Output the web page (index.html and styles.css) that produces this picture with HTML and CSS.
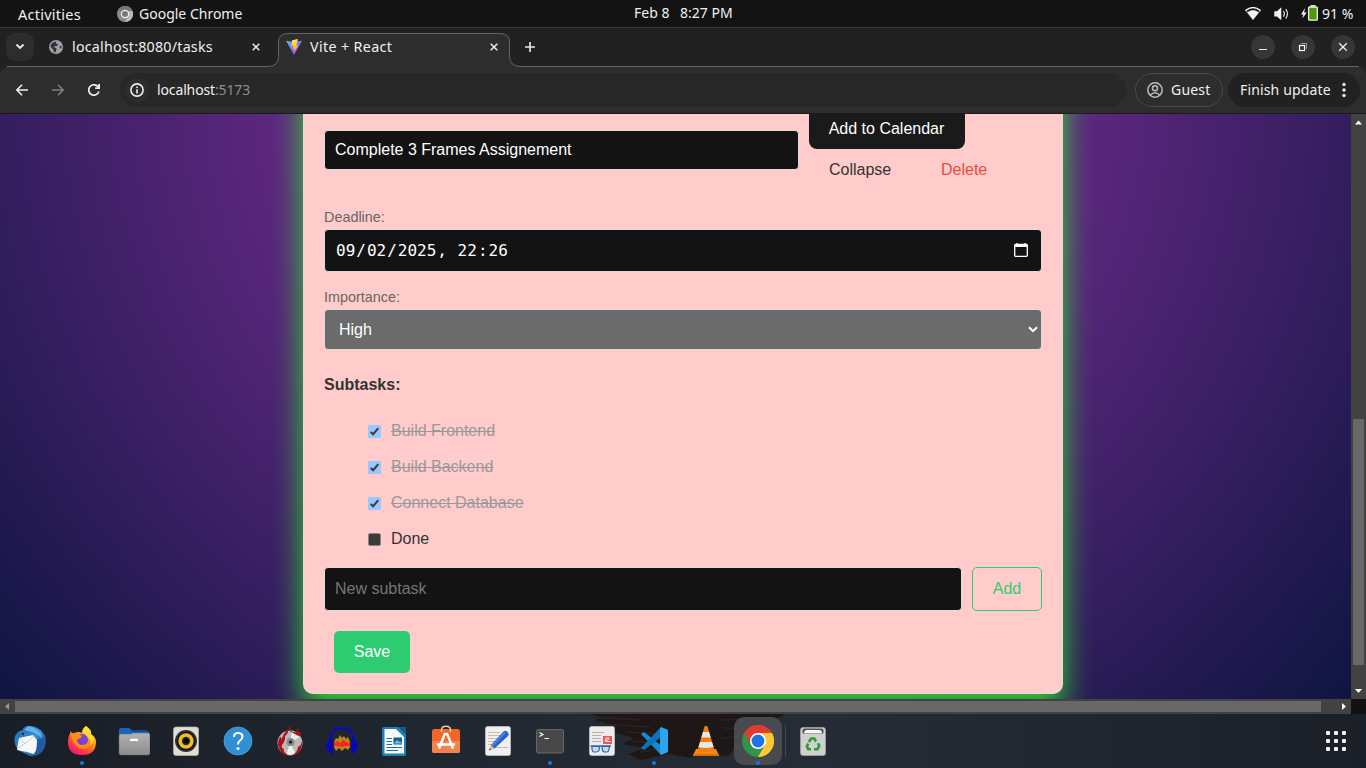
FILE: index.html
```
<!DOCTYPE html>
<html lang="en">
<head>
<meta charset="utf-8">
<title>Vite + React</title>
<link rel="stylesheet" href="styles.css">
</head>
<body>
<div class="desktop">
  <header class="topbar">
    <span class="activities">Activities</span>
    <svg class="app-icon" width="16" height="16" viewBox="0 0 16 16"><circle cx="8" cy="8" r="8" fill="#8b8b8b"/><path d="M8 8 L1.2 3.8 A8 8 0 0 1 15.5 5 Z" fill="#777"/><path d="M8 16 A8 8 0 0 0 15.5 5 H9 L11.5 10 Z" fill="#b9b9b9"/><circle cx="8" cy="8" r="4.2" fill="#f2f2f2"/><circle cx="8" cy="8" r="3" fill="#777"/></svg>
    <span class="app-name">Google Chrome</span>
    <span class="clock-date">Feb 8</span>
    <span class="clock-time">8:27 PM</span>
    <div class="status">
      <svg width="16" height="14" viewBox="0 0 16 14"><path d="M.3 3.6 Q8 -2.6 15.7 3.6 L8 13.2Z" fill="#aaa"/><path d="M1.5 3.7 Q8 -1.3 14.500 3.7 L13.400 5 Q8 1 2.600 5Z" fill="#161616"/><path d="M2.500 5.500 Q8 1.500 13.500 5.500 L8 12.600Z" fill="#f4f4f4"/><path d="M.3 3.600 Q8 -2.600 15.700 3.600" fill="none" stroke="#f4f4f4" stroke-width="1.200"/></svg>
      <svg class="speaker" width="15" height="14" viewBox="0 0 15 14"><path d="M.3 4.300 H3 L7.300 .300 V13.200 L3 9.500 H.3Z" fill="#f2f2f2"/><path d="M9.400 4 Q11.300 6.800 9.400 9.600 M11.700 2.200 Q15.300 6.800 11.700 11.500" fill="none" stroke="#dcdcdc" stroke-width="1.300"/></svg>
      <svg class="battery" width="17" height="16" viewBox="0 0 17 16"><path d="M4 3 L0 9.500 H2.300 L1.300 13.500 L5.700 7.500 H3.200Z" fill="#f2f2f2"/><rect x="7.600" y="2" width="8.700" height="13.200" rx="1" fill="#4e9a06" stroke="#f2f2f2" stroke-width="1.300"/><path d="M9.500 .800 H14.500" stroke="#f2f2f2" stroke-width="1.500"/></svg>
      <span class="percent">91 %</span>
    </div>
  </header>

  <div class="tabstrip">
    <svg class="tab-outline" width="1366" height="40" viewBox="0 0 1366 40"><path d="M8 40 V39.500 H268 Q278.500 38.500 278.500 29 V15 Q278.500 6.500 288 6.500 H500 Q509.500 6.500 509.500 15 V29 Q509.500 39.500 521 39.500 H1358 V40Z" fill="#2d2d2d"/><path d="M7 39.500 H268 Q278.500 39.500 278.500 29 V15 Q278.500 6.500 288 6.500 H500 Q509.500 6.500 509.500 15 V29 Q509.500 39.500 521 39.500 H1359" fill="none" stroke="#646464"/></svg>
    <div class="tabs">
      <span class="tab-search"><svg width="10" height="7" viewBox="0 0 10 7"><path d="M1.500 1.500 L5 5 L8.500 1.500" fill="none" stroke="#eee" stroke-width="1.800"/></svg></span>
      <div class="tab tab-first">
        <svg width="14" height="14" viewBox="0 0 14 14"><circle cx="7" cy="7" r="7" fill="#9aa0a6"/><path d="M7.500 1.500 Q6 3.500 8.500 4 Q9.500 5 8 6 L5 6.200 Q5 8 7 8 Q8.500 9 7 10.500 Q7 12 6 12.500 Q4.500 12 4.500 10 L1.500 6.500 Q2 3 5 2Z M12.500 6 Q10.500 5.500 10.500 7 Q11 8.500 12.300 8.600Z" fill="#303235"/></svg>
        <span class="tab-title">localhost:8080/tasks</span>
        <svg width="8" height="8" viewBox="0 0 8 8"><path d="M.7 .700 L7.300 7.300 M7.300 .700 L.7 7.300" stroke="#eee" stroke-width="1.500"/></svg>
      </div>
      <div class="tab tab-second">
        <svg width="16" height="16" viewBox="0 0 16 16"><defs><linearGradient id="vt" x1="0" y1="0" x2=".6" y2="1"><stop offset="0" stop-color="#41c0ff"/><stop offset="1" stop-color="#bd34fe"/></linearGradient><linearGradient id="vb" x1="0" y1="0" x2="0" y2="1"><stop offset="0" stop-color="#ffe75a"/><stop offset="1" stop-color="#ffa800"/></linearGradient></defs><path d="M0 1.800 L7.500 3 L16 1.800 L8 16Z" fill="url(#vt)"/><path d="M12 0 L6 1.300 L5.500 7.500 L7.500 7.200 L7 10 L8.500 9.700 L8 13 L12.300 6.500 L10.200 6.700Z" fill="url(#vb)"/></svg>
        <span class="tab-title">Vite + React</span>
        <svg width="8" height="8" viewBox="0 0 8 8"><path d="M.7 .700 L7.300 7.300 M7.300 .700 L.7 7.300" stroke="#eee" stroke-width="1.500"/></svg>
      </div>
      <svg class="new-tab" width="10" height="10" viewBox="0 0 10 10"><path d="M5 0 V10 M0 5 H10" stroke="#e6e6e6" stroke-width="1.700"/></svg>
      <div class="window-buttons">
        <span><svg width="10" height="10" viewBox="0 0 10 10"><path d="M1 7.500 H9" stroke="#eee"/></svg></span>
        <span><svg width="10" height="10" viewBox="0 0 10 10"><path d="M3 1.500 H8.500 V7" fill="none" stroke="#999"/><rect x="1.500" y="3.500" width="5" height="5" fill="none" stroke="#fff" stroke-width="1.200"/></svg></span>
        <span><svg width="10" height="10" viewBox="0 0 10 10"><path d="M1.200 1.200 L8.800 8.800 M8.800 1.200 L1.200 8.800" stroke="#eee" stroke-width="1.300"/></svg></span>
      </div>
    </div>
  </div>

  <div class="toolbar">
    <svg class="nav" width="12" height="12" viewBox="0 0 12 12"><path d="M12 6 H1 M6 .8 L.9 6 L6 11.200" fill="none" stroke="#eee" stroke-width="1.600"/></svg>
    <svg class="nav" width="12" height="12" viewBox="0 0 12 12"><path d="M0 6 H11 M6 .8 L11.100 6 L6 11.200" fill="none" stroke="#7e7e7e" stroke-width="1.600"/></svg>
    <svg class="nav" width="12" height="12" viewBox="0 0 12 12"><path d="M10.900 7.500 A5.200 5.200 0 1 1 10.200 3" fill="none" stroke="#eee" stroke-width="1.700"/><path d="M12 0 V4.900 H7.200 V3.300 H10.200 V0Z" fill="#eee"/></svg>
    <div class="address">
      <span class="site-info"><svg width="14" height="14" viewBox="0 0 14 14"><circle cx="7" cy="7" r="6.100" fill="none" stroke="#eee" stroke-width="1.600"/><path d="M7 6.200 V10.500 M7 3.500 V5" stroke="#eee" stroke-width="1.600"/></svg></span>
      <span class="url">localhost<i>:5173</i></span>
    </div>
    <div class="guest"><svg width="16" height="16" viewBox="0 0 16 16" fill="none" stroke="#bdbdbd" stroke-width="1.500"><circle cx="8" cy="8" r="7.200"/><circle cx="8" cy="6.300" r="2.500"/><path d="M3.300 13 Q8 8.500 12.700 13"/></svg><span>Guest</span></div>
    <div class="update"><span>Finish update</span><svg width="4" height="16" viewBox="0 0 4 16" fill="#eee"><circle cx="2" cy="2.500" r="1.700"/><circle cx="2" cy="8" r="1.700"/><circle cx="2" cy="13.500" r="1.700"/></svg></div>
  </div>

  <div class="viewport">
    <main class="page">
      <section class="card">
        <div class="task-head">
          <div class="field title-field">Complete 3 Frames Assignement</div>
          <div class="actions">
            <button class="calendar-btn">Add to Calendar</button>
            <div class="links"><span class="collapse">Collapse</span><span class="delete">Delete</span></div>
          </div>
        </div>
        <label class="label">Deadline:</label>
        <div class="field date-field">
          <span class="date"><b>09</b>/<b>02</b>/<b>2025</b>, <b>22</b>:<b>26</b></span>
          <svg width="14" height="14" viewBox="0 0 14 14"><path d="M1.500 1.500 H12.500 Q13.300 1.500 13.300 2.300 V12.500 Q13.300 13.300 12.500 13.300 H1.500 Q.7 13.300 .7 12.500 V2.300 Q.7 1.500 1.500 1.500Z" fill="none" stroke="#fff" stroke-width="1.300"/><path d="M1 1.300 H13 V4 H1Z M2.300 0 H3.600 V2 H2.300Z M10.400 0 H11.700 V2 H10.400Z" fill="#fff"/></svg>
        </div>
        <label class="label importance-label">Importance:</label>
        <div class="field select-field"><span>High</span><svg width="10" height="7" viewBox="0 0 10 7"><path d="M1 1.200 L5 5.200 L9 1.200" fill="none" stroke="#fff" stroke-width="2"/></svg></div>
        <h4 class="subtasks-title">Subtasks:</h4>
        <ul class="subtasks">
          <li class="done"><svg width="13" height="13" viewBox="0 0 13 13"><rect width="13" height="13" rx="1" fill="#99c8ff"/><path d="M2.700 7 L5.100 9.200 L10.300 3.200" fill="none" stroke="#3b3b3b" stroke-width="2"/></svg><span>Build Frontend</span></li>
          <li class="done"><svg width="13" height="13" viewBox="0 0 13 13"><rect width="13" height="13" rx="1" fill="#99c8ff"/><path d="M2.700 7 L5.100 9.200 L10.300 3.200" fill="none" stroke="#3b3b3b" stroke-width="2"/></svg><span>Build Backend</span></li>
          <li class="done"><svg width="13" height="13" viewBox="0 0 13 13"><rect width="13" height="13" rx="1" fill="#99c8ff"/><path d="M2.700 7 L5.100 9.200 L10.300 3.200" fill="none" stroke="#3b3b3b" stroke-width="2"/></svg><span>Connect Database</span></li>
          <li class="open"><svg width="13" height="13" viewBox="0 0 13 13"><rect x=".5" y=".5" width="12" height="12" rx="1.500" fill="#3b3b3b" stroke="#858585"/></svg><span>Done</span></li>
        </ul>
        <div class="new-row"><div class="field new-field">New subtask</div><button class="add-btn">Add</button></div>
        <button class="save-btn">Save</button>
      </section>
    </main>
    <div class="vbar">
      <svg width="15" height="15" viewBox="0 0 15 15"><path d="M4 10.500 L7.500 6.500 L11 10.500Z" fill="#fff"/></svg>
      <div class="vthumb"></div>
      <svg width="15" height="15" viewBox="0 0 15 15"><path d="M4 5 L7.500 9 L11 5Z" fill="#fff"/></svg>
    </div>
    <div class="hbar">
      <svg width="15" height="15" viewBox="0 0 15 15"><path d="M9 4 L5 7.500 L9 11Z" fill="#969696"/></svg>
      <div class="hthumb"></div>
      <svg width="15" height="15" viewBox="0 0 15 15"><path d="M6 4 L10 7.500 L6 11Z" fill="#fff"/></svg>
    </div>
    <div class="corner"></div>
  </div>

  <footer class="dock">
    <svg class="wallpaper" width="1366" height="54" viewBox="0 0 1366 54"><path d="M590 0 H785 L770 8 L776 12 L758 18 L752 30 L735 34 L728 42 L700 40 L690 44 L668 40 L640 46 L628 40 L645 34 L622 30 L634 24 L606 16 L618 12 L594 6 L604 4Z" fill="#1d1717"/><path d="M594 3 L640 6 M604 10 L650 13 M625 18 L660 20 M632 27 L662 30 M640 38 L655 36 M720 6 L772 4 M724 14 L760 16 M722 24 L750 22" stroke="#2c2220" stroke-width="1.500"/></svg>
    <div class="apps">
    <div class="app"><svg viewBox="0 0 32 32"><defs><linearGradient id="tb" x1="0" y1="0" x2="1" y2="1"><stop offset="0" stop-color="#1c5fa8"/><stop offset=".5" stop-color="#3d8fd6"/><stop offset="1" stop-color="#1a3c7c"/></linearGradient></defs><path d="M9 3 Q13 0 18 1 Q28 3 31 12 Q33 22 27 28 Q22 32 16 31 L4 25 Q-1 18 1 11 Q4 5 9 5Z" fill="url(#tb)"/><path d="M14 1 Q26 3 28 13 Q20 6 10 5Z" fill="#62b5ea"/><path d="M5 13 L19 10 L23 15 L22 30 L13 27 L3 25Z" fill="#f8f8f8"/><path d="M6 13 L11 19 L20 11 M3 24 L10 19" fill="none" stroke="#b9bccb" stroke-width=".8"/><path d="M23 14 Q30 14 31 9 Q34 22 25 29 L17 31 Q25 26 23 14Z" fill="#245aa5"/><circle cx="9" cy="9" r="1" fill="#111"/></svg></div>
    <div class="app"><svg viewBox="0 0 32 32"><defs><linearGradient id="ff" x1=".8" y1="0" x2=".2" y2="1"><stop offset="0" stop-color="#fff44f"/><stop offset=".4" stop-color="#ff980e"/><stop offset=".75" stop-color="#ff3647"/><stop offset="1" stop-color="#e31587"/></linearGradient></defs><path d="M20 1 Q26 6 25 9 Q30 12 30 17 Q30 30 16 30 Q2 30 2 17 Q2 11 5 7 L6 10 Q8 7 13 7 Q17 8 16 7 Q16 4 20 1Z" fill="url(#ff)"/><circle cx="16" cy="15" r="6" fill="#7a40d8"/><path d="M4 6 Q6 9 12 9 L16 11 Q15 14 11 14 Q11 20 17 20 Q23 19 23 13 Q27 23 18 24 Q7 24 4 6Z" fill="#ff8a16"/><path d="M20 1 Q14 6 20 10 Q26 14 24 21 Q31 15 25 9 Q26 5 20 1Z" fill="#ffd936"/></svg><i></i></div>
    <div class="app"><svg viewBox="0 0 32 32"><path d="M1 6 Q1 3 3 3 H11 Q12 3 14 6 H29 Q31 6 31 8 V16 H1Z" fill="#1666bd"/><path d="M14 5 H28 Q30 5 30 7 H15Z" fill="#0e4e98"/><defs><linearGradient id="fi" x1="0" y1="0" x2="0" y2="1"><stop offset="0" stop-color="#b2b2b2"/><stop offset="1" stop-color="#8d8d8d"/></linearGradient></defs><path d="M1 11 Q1 9 3 9 H13 L15 8 H30 Q32 8 32 10 V28 Q32 30 30 30 H3 Q1 30 1 28Z" fill="url(#fi)" stroke="#666" stroke-width=".5"/><rect x="12" y="13.700" width="8" height="2.300" rx=".5" fill="#fff"/></svg></div>
    <div class="app"><svg viewBox="0 0 32 32"><rect x="3.500" y="2" width="25" height="28.500" rx="2.500" fill="#e1ddd3" stroke="#b8b5ad" stroke-width=".7"/><circle cx="16" cy="16" r="11" fill="#2d3033"/><circle cx="16" cy="16" r="9.200" fill="#121315"/><circle cx="16" cy="16" r="7.700" fill="#f1be2a"/><circle cx="16" cy="16" r="4.200" fill="#302d22"/><circle cx="16" cy="16" r="2.700" fill="#050505"/></svg></div>
    <div class="app"><svg viewBox="0 0 32 32"><circle cx="16" cy="16" r="14" fill="#318fd5" stroke="#5aaae1" stroke-width=".7"/><path d="M12 12 Q12 8 16 8 Q20.500 8 20.500 11.500 Q20.500 14 18 15.500 Q16 17 16 19.500" fill="none" stroke="#fff" stroke-width="2"/><circle cx="16" cy="23.500" r="1.500" fill="#fff"/></svg></div>
    <div class="app"><svg viewBox="0 0 32 32"><circle cx="16" cy="18" r="12.500" fill="#bababa"/><path d="M16 18 L18 5.500 L27 11Z M16 18 L12 30 L22 29Z" fill="#eee"/><path d="M6 12 Q4 15 4 20 Q6 30 16 31 Q8 27 10 24 Q7 23 8 20 Q12 15 11 11 Q15 8 14 4 Q9 9 7 15 Q8 12 6 12Z M15 0 Q17 4 17 6 Q21 8 23 7 Q22 4 24 2 Q23 6 27 8 Q26 9 27 12 Q22 10 19 8 Q14 6 15 0Z M28 16 Q29 28 17 31 Q24 27 24 22 Q27 21 28 16Z" fill="#ac1213"/><circle cx="16.500" cy="17" r="4" fill="#888"/><circle cx="16.500" cy="17" r="1.500" fill="#111"/></svg></div>
    <div class="app"><svg viewBox="0 0 32 32"><path d="M4 16 Q5 3 16 3 Q27 3 28 16" fill="none" stroke="#0808dc" stroke-width="2"/><path d="M8 17 L10 13 L12 14 L14 10 L16 13 L18 11 L20 14 L22 12 L24 17 V22 L22 25 L19 23 L16 26 L13 23 L10 26 L8 22Z" fill="#d29a20" opacity=".85"/><path d="M8 18 L11 16 L14 18 L17 15 L20 17 L24 18 V21 L20 21 L16 22 L12 21 L8 21Z" fill="#ff251c"/><path d="M6 12 Q4 12 3.500 16 Q0 17 0 22 Q1 26 3 26 Q5 30 7 28Z M26 12 Q28 12 28.500 16 Q32 17 32 22 Q31 26 29 26 Q27 30 25 28Z" fill="#0505c4"/></svg></div>
    <div class="app"><svg viewBox="0 0 32 32"><path d="M6 2 H21 L28 9 V29 Q28 31 26 31 H6 Q4 31 4 29 V4 Q4 2 6 2Z" fill="#207fb3"/><path d="M20 2 H28 V10Z" fill="#135b88"/><path d="M6.500 4 H18 L26 12 V28.500 H6.500Z" fill="#f6fafb"/><path d="M8.500 13.500 H14 M8.500 16.500 H14 M8.500 19.500 H14 M8.500 22.500 H24 M8.500 25.500 H20" stroke="#1d6f9e" stroke-width="1.200"/><rect x="15.500" y="12.500" width="8.500" height="7" fill="#155d86"/><path d="M16 18.500 L19 15 L21 17 L22 16 L24 18.500" fill="#78c1e8"/></svg></div>
    <div class="app"><svg viewBox="0 0 32 32"><rect x="2" y="4" width="28" height="24" rx="2.500" fill="#f26627"/><path d="M2 16 H30 V26 Q30 28 28 28 H4 Q2 28 2 26Z" fill="#f5814c"/><path d="M11.500 7 V5 Q11.500 1.200 16 1.200 Q20.500 1.200 20.500 5 V7" fill="none" stroke="#e9cbb0" stroke-width="1.500"/><path d="M9 23.500 L14.800 9 H17.200 L23 23.500 M7 19.500 H25" fill="none" stroke="#fff" stroke-width="2.400"/></svg></div>
    <div class="app"><svg viewBox="0 0 32 32"><rect x="3.500" y="1.500" width="25" height="29" rx="2" fill="#f0f0f0" stroke="#c8c8c8" stroke-width=".7"/><path d="M6 7.500 H18 M6 10.500 H18 M6 13.500 H17 M6 16.500 H14 M6 19.500 H12 M12 22.500 H26" stroke="#c5bcae"/><path d="M7 25.500 L9 20 L12.500 23.500Z" fill="#e9b26e"/><path d="M9 20 L22 6 Q24 5 26 7.500 Q27.500 9.500 26 11 L12.500 23.500Z" fill="#2862d0"/><path d="M10.500 20.500 L23 7.500" stroke="#5b8ff0" stroke-width="1.200"/><path d="M7 25.500 L7.800 23.400 L9 24.700Z" fill="#222"/></svg></div>
    <div class="app"><svg viewBox="0 0 32 32"><rect x="2.500" y="4.500" width="27" height="23.500" rx="2" fill="#484848" stroke="#686868"/><path d="M5.500 7.500 L9 9.500 L5.500 11.500 M10.500 13.500 H15" fill="none" stroke="#fff" stroke-width="1.100"/></svg><i></i></div>
    <div class="app"><svg viewBox="0 0 32 32"><rect x="3.500" y="1.500" width="25" height="29" rx="2" fill="#ececec" stroke="#c8c8c8" stroke-width=".7"/><path d="M6 7.500 H18 M6 10.500 H15 M6 13.500 H15 M6 16.500 H15" stroke="#b9b0a6"/><rect x="17" y="11" width="9" height="8" fill="#ef5652"/><path d="M18.500 16.500 Q23 15 23 13 H20 Q18 17 24.500 16.500" fill="none" stroke="#fff"/><path d="M4.500 21 H25" stroke="#2f65ad" stroke-width="1.500"/><path d="M6 21.500 H13.500 L13 25.500 Q12 27 10 27 H8 Q6.500 27 6 24.500Z M16 21.500 H23.500 L23 24.500 Q22.500 27 21 27 H19 Q17 27 16.500 25.500Z" fill="#c9d9ed" stroke="#2f65ad" stroke-width="1.200"/></svg></div>
    <div class="app"><svg viewBox="0 0 32 32"><path d="M3 9 L6 7 L30 26 L23 30Z" fill="#168bd1"/><path d="M3 23 L6 25 L30 7 L23 2Z" fill="#0b74b8"/><path d="M23 2 L29 4.500 Q30 5 30 6 V26 Q30 27 29 27.500 L23 30 L22 28 V4Z" fill="#2aa5ef"/></svg><i></i></div>
    <div class="app"><svg viewBox="0 0 32 32"><path d="M6 24 H26 L29 30.500 H3Z" fill="#f28a16"/><path d="M14.500 1.500 Q16 0 17.500 1.500 L24.500 25 Q16 29 7.500 25Z" fill="#ef7f14"/><path d="M13 7 H19 L20.700 12.500 H11.300Z M10 17 H22 L23.500 22 Q16 24 8.500 22Z" fill="#e8e8e8"/><path d="M3 29 H29 V31 H3Z" fill="#d96c0c"/></svg></div>
    <div class="app active"><svg viewBox="0 0 32 32"><circle cx="16" cy="16" r="16" fill="#31944b"/><path d="M16 8 H29.900 A16 16 0 0 1 16 32 L22.900 20Z" fill="#fcc934"/><path d="M2.100 8 A16 16 0 0 1 29.900 8 H16 L9.100 20Z" fill="#e23a2e"/><circle cx="16" cy="16" r="8" fill="#fff"/><circle cx="16" cy="16" r="6.400" fill="#1a73e8"/></svg><i></i></div>
    <div class="divider"></div>
    <div class="app trash"><svg viewBox="0 0 32 32"><rect x="3.500" y="2.500" width="25" height="28" rx="2.500" fill="#d0d0ce" stroke="#a6a6a6" stroke-width=".7"/><rect x="5.500" y="3.500" width="21" height="5.500" rx="2" fill="#555"/><path d="M7 8.500 Q7 5 10 5 H22 Q25 5 25 8.500Z" fill="#f6f6f6"/><g fill="none" stroke="#2c9a34" stroke-width="2.600"><path d="M11.800 17 L14.200 13.500 H17.200 L19 16.500"/><path d="M21 18.300 L22.200 20.800 L20.400 24.200 H17"/><path d="M14 24.200 H11.300 L9.800 21.200 L11.300 18.700"/></g></svg></div>
    <svg class="show-apps" width="20" height="20" viewBox="0 0 20 20" fill="#f2f2f2"><rect width="4" height="4" rx="1"/><rect x="8" width="4" height="4" rx="1"/><rect x="16" width="4" height="4" rx="1"/><rect y="8" width="4" height="4" rx="1"/><rect x="8" y="8" width="4" height="4" rx="1"/><rect x="16" y="8" width="4" height="4" rx="1"/><rect y="16" width="4" height="4" rx="1"/><rect x="8" y="16" width="4" height="4" rx="1"/><rect x="16" y="16" width="4" height="4" rx="1"/></svg>
    </div>
  </footer>
</div>
</body>
</html>
```
FILE: styles.css
```
* { box-sizing: border-box; }
body { margin: 0; background: #131313; overflow: hidden; font-family: "Noto Sans", "Open Sans", sans-serif; font-size: 14px; color: #f0f0f0; }
svg { display: block; flex: none; }
span { white-space: nowrap; }
button { font: inherit; padding: 0; margin: 0; }
.desktop { width: 1366px; height: 768px; display: grid; grid-template-rows: 27px 40px 47px 600px 54px; background: #212121; }

.topbar { display: flex; align-items: center; background: #131313; padding-left: 18px; }
.activities { width: 99px; font-size: 14.5px; letter-spacing: 0.25px; }
.app-name { margin-left: 6px; width: 495px; }
.clock-date { width: 46px; padding-bottom: 2px; }
.clock-time { width: 565px; padding-bottom: 2px; }
.status { display: flex; align-items: center; }
.speaker { margin-left: 13px; }
.battery { margin-left: 12px; margin-top: -2px; }
.percent { margin-left: 4px; }

.tabstrip { display: grid; background: #212121; border-top: 1px solid #383838; }
.tab-outline { grid-area: 1 / 1; margin-top: -1px; }
.tabs { grid-area: 1 / 1; display: flex; align-items: center; height: 37px; padding-left: 6px; }
.tab-search { width: 28px; height: 28px; border-radius: 9px; background: #2d2d2d; display: flex; align-items: center; justify-content: center; }
.tab { display: flex; align-items: center; }
.tab-first { width: 237px; margin-left: 15px; }
.tab-title { font-size: 14.3px; letter-spacing: 0.2px; }
.tab-first .tab-title { margin-left: 9px; width: 180px; }
.tab-second .tab-title { margin-left: 8px; width: 180px; letter-spacing: 0.35px; }
.new-tab { margin-left: 27px; }
.window-buttons { display: flex; gap: 16px; margin-left: 716px; }
.window-buttons span { width: 24px; height: 24px; border-radius: 50%; background: #363636; display: flex; align-items: center; justify-content: center; }

.toolbar { display: flex; align-items: center; background: #2d2d2d; border-bottom: 1px solid #1a1a1a; border-radius: 8px 8px 0 0; padding-left: 16px; }
.nav { margin-right: 24px; }
.address { display: flex; align-items: center; width: 1006px; height: 34px; margin-left: -4px; padding-left: 5px; background: #272727; border-radius: 17px; }
.site-info { width: 24px; height: 24px; border-radius: 50%; background: #2d2d2d; display: flex; align-items: center; justify-content: center; }
.url { margin-left: 8px; padding-bottom: 2px; letter-spacing: -0.13px; }
.url i { font-style: normal; color: #8e8e8e; }
.guest { display: flex; align-items: center; width: 88px; height: 34px; margin-left: 9px; padding-left: 11px; gap: 8px; border: 1px solid #494949; border-radius: 17px; }
.guest span { padding-bottom: 2px; letter-spacing: 0.2px; }
.update { display: flex; align-items: center; width: 132px; height: 34px; margin-left: 5px; padding-left: 12px; border-radius: 17px; background: #212121; }
.update span { width: 102px; padding-bottom: 2px; letter-spacing: 0.15px; }

.viewport { display: grid; grid-template-columns: 1351px 15px; grid-template-rows: 585px 15px; overflow: hidden; }
.page { overflow: hidden; background: radial-gradient(circle 944px at 675px -30px, #9c35b0, #09143d); font-family: "Liberation Sans", Arial, sans-serif; font-size: 16px; }
.card { width: 760px; height: 640px; margin: -60px 0 0 303px; padding: 60px 20px 0; background: #ffcccb; border: 1px solid #ddd; border-top: 0; border-radius: 0 0 10px 10px; box-shadow: 0 14px 30px rgb(50, 215, 45); color: #333; }
.field { display: flex; align-items: center; border: 1px solid #ddd; border-radius: 4px; background: #131313; color: #fff; }
.task-head { display: flex; gap: 10px; height: 94px; }
.title-field { width: 475px; height: 40px; margin-top: 16px; padding: 0 10px; }
.calendar-btn { display: block; width: 156px; height: 42px; margin-top: -7px; background: #1a1a1a; color: #fff; border: 0; border-radius: 8px; padding: 2px 1px 0 0; }
.links { display: flex; margin: 12px 0 0 20px; }
.collapse { width: 112px; }
.delete { color: #e74c3c; }
.label { display: block; height: 21px; line-height: 18px; font-size: 14.4px; color: #666; }
.date-field { height: 43px; padding: 0 13px 1px 10px; justify-content: space-between; }
.date { white-space: pre; font-family: "DejaVu Sans Mono", monospace; }
.date b { font-weight: 400; padding: 0 1px; }
.importance-label { margin-top: 16px; }
.select-field { height: 41px; padding: 0 3px 0 14px; justify-content: space-between; background: #6b6b6b; }
.subtasks-title { margin: 25px 0 0; font-size: 16px; line-height: 20px; }
.subtasks { list-style: none; margin: 18px 0 0; padding: 0 0 0 44px; }
.subtasks li { display: flex; align-items: center; height: 36px; }
.subtasks li.open { height: 35px; }
.subtasks svg { margin-top: 1px; }
.subtasks span { margin-left: 10px; }
.done span { color: #999; text-decoration: line-through; }
.new-row { display: flex; gap: 10px; margin-top: 11px; }
.new-field { width: 638px; height: 44px; padding: 0 10px 1px; color: #757575; }
.add-btn { width: 70px; height: 44px; border: 1px solid #2ecc71; border-radius: 5px; background: transparent; color: #2ecc71; padding-bottom: 1px; }
.save-btn { display: block; width: 76px; height: 42px; margin: 20px 0 0 10px; border: 0; border-radius: 5px; background: #2ecc71; color: #fff; }
.vbar { background: #424242; }
.vthumb { width: 11px; height: 246px; margin: 290px 0 19px 2px; background: #686868; }
.hbar { display: flex; align-items: center; background: #424242; }
.hthumb { width: 1306px; height: 11px; background: #686868; margin-right: 15px; }
.corner { background: #121212; }

.dock { display: grid; background: linear-gradient(90deg, #191e26, #232933 40%, #262c36 60%, #1b2028); }
.wallpaper { grid-area: 1 / 1; }
.apps { grid-area: 1 / 1; display: flex; align-items: center; padding-left: 4px; }
.app { width: 52px; height: 54px; padding-top: 11px; display: grid; grid-template-rows: 32px 8px; justify-items: center; align-items: end; }
.app svg { width: 32px; height: 32px; }
.app i { width: 4px; height: 4px; border-radius: 50%; background: #1177e8; }
.active { width: 48px; height: 48px; margin: 0 2px; padding-top: 8px; border-radius: 10px; background: #484a50; }
.divider { width: 1px; height: 32px; background: #45484f; margin-left: 1px; }
.trash { margin-left: 1px; }
.show-apps { margin-left: 487px; }
```
